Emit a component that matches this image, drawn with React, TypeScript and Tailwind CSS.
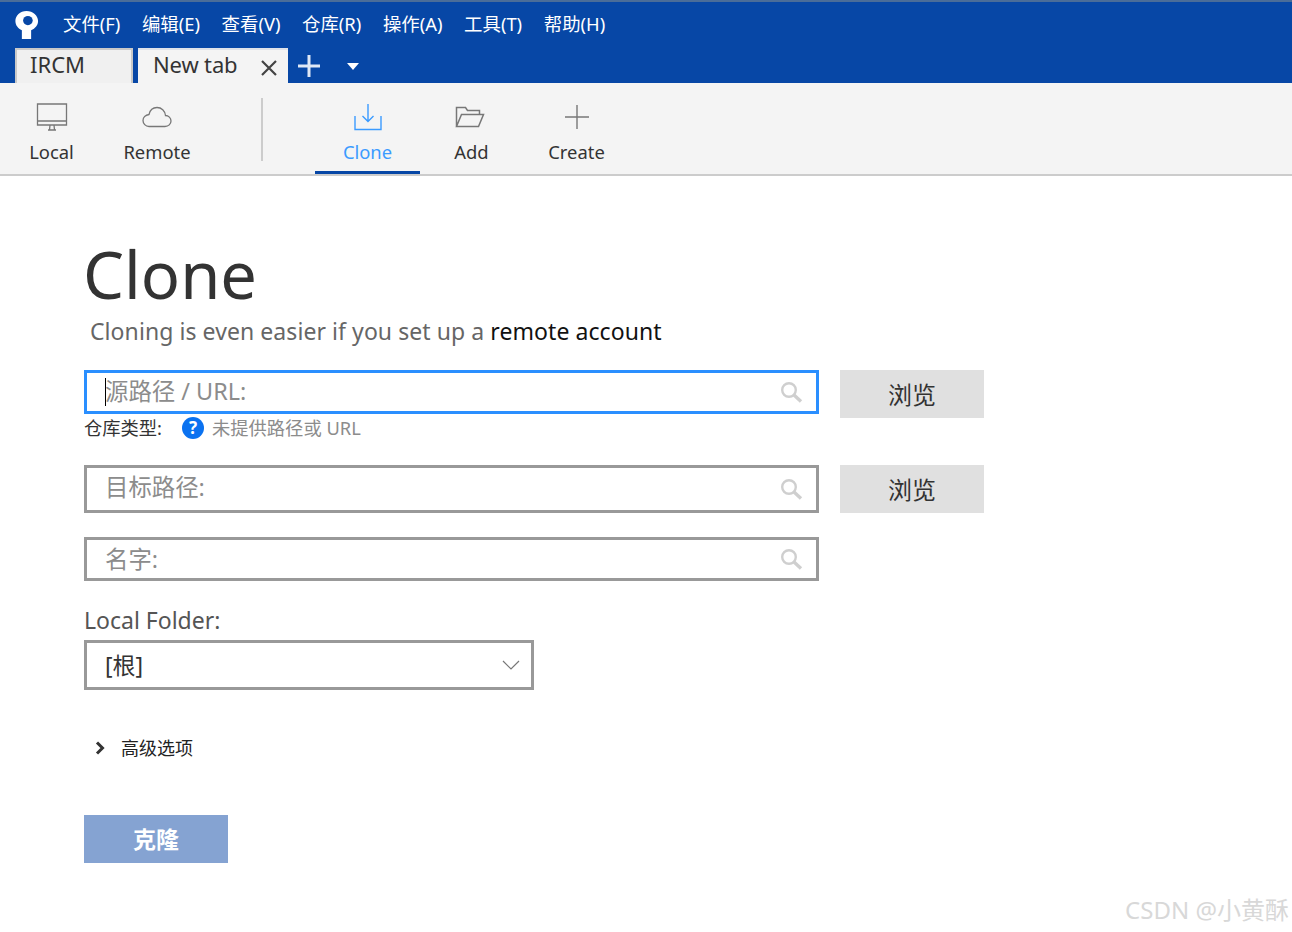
const font = "[font-family:'Noto_Sans','Noto_Sans_CJK_SC',sans-serif]";

const menus = ["文件(F)", "编辑(E)", "查看(V)", "仓库(R)", "操作(A)", "工具(T)", "帮助(H)"];

function SearchIcon() {
  return (
    <svg width="24" height="24" viewBox="0 0 24 24" fill="none" stroke="#cfcfcf" className="shrink-0">
      <circle cx="10" cy="10" r="6.8" strokeWidth="2.4" />
      <path d="M15 15l7 6.5" strokeWidth="3.4" />
    </svg>
  );
}

function ToolButton({ label, active, icon, width }: { label: string; active?: boolean; icon: React.ReactNode; width: string }) {
  return (
    <div className={`flex flex-col items-center h-full ${width} ${active ? "border-b-[3px] border-[#0747a6]" : ""}`}>
      <div className="h-[44px] mt-[12px] flex items-center justify-center">{icon}</div>
      <span className={`text-[18.400px] leading-[26px] ${active ? "text-[#3b9bff]" : "text-[#333]"}`}>{label}</span>
    </div>
  );
}

function Field({ placeholder, focused, height, textClass }: { placeholder: string; focused?: boolean; height: string; textClass?: string }) {
  return (
    <div className={`w-[735px] ${height} border-[3px] ${focused ? "border-[#2a8fff]" : "border-[#999]"} bg-white flex items-center pl-[18px] pr-[13px]`}>
      {focused && <span className="w-px h-[28px] bg-black -mr-px" />}
      <span className={`flex-1 text-[23.400px] leading-none text-[#8c8c8c] ${textClass ?? ""}`}>{placeholder}</span>
      <SearchIcon />
    </div>
  );
}

function BrowseButton() {
  return (
    <button className="w-[144px] h-[48px] ml-[21px] bg-[#e0e0e0] text-[24px] text-[#333] flex items-center justify-center pt-0.5">
      浏览
    </button>
  );
}

export default function App() {
  return (
    <div className={`${font} relative w-[1292px] h-[932px] bg-white overflow-hidden`}>
      {/* title bar */}
      <div className="bg-[#0747a6] h-[83px] border-t-2 border-[#4a6d99] flex flex-col">
        <div className="h-[44px] flex items-center pl-[14px]">
          <svg width="25" height="30" viewBox="0 0 27 34" preserveAspectRatio="none" className="mt-[1px]">
            <path d="M13.500 1C6.500 1 1.500 6 1.500 12.500c0 5 3 8.500 7 10.500v10h10V23c4.500-2 7.500-6 7.500-10.500C26 6 20.500 1 13.500 1z" fill="#fff" />
            <circle cx="15" cy="12" r="5.200" fill="#0747a6" />
          </svg>
          <div className="flex ml-6 gap-[21.600px] text-[18.400px] text-white -mt-px">
            {menus.map((m) => (
              <span key={m}>{m}</span>
            ))}
          </div>
        </div>
        <div className="h-[37px] flex items-end pl-[15px]">
          <div className="w-[118px] h-[35px] bg-[#f0f0f0] border-2 border-b-0 border-[#c9c9c9] pl-[13px] text-[22px] leading-[28px] text-[#333]">
            IRCM
          </div>
          <div className="w-[150px] h-[35px] ml-[5px] bg-[#f4f4f4] border-t-2 border-[#dfe3ea] flex items-center pl-[15px] text-[22px] text-[#333]">
            <span className="flex-1 pb-[4px] tracking-[-0.15px]">New tab</span>
            <svg width="18" height="18" viewBox="0 0 18 18" stroke="#444" strokeWidth="2.200" className="mr-[10px] mt-[2px]">
              <path d="M2 2l14 14M16 2L2 16" />
            </svg>
          </div>
          <svg width="24" height="24" viewBox="0 0 24 24" stroke="#dfe8f5" strokeWidth="3" className="ml-[9px] mb-[5px]">
            <path d="M12 1v22M1 12h22" />
          </svg>
          <svg width="12" height="7" viewBox="0 0 12 7" fill="#fff" className="ml-[26px] mb-[13px]">
            <path d="M0 0h12L6 7z" />
          </svg>
        </div>
      </div>

      {/* toolbar */}
      <div className="h-[93px] bg-[#f4f4f4] border-b-2 border-[#cccccc] flex items-stretch">
        <ToolButton
          label="Local"
          width="w-[103px]"
          icon={
            <svg width="32" height="28" viewBox="0 0 32 28" fill="none" stroke="#777" strokeWidth="1.300">
              <path d="M1.500 1h29v21h-29zM1.500 18h29M12 27h8M14 22l-.5 5M18 22l.5 5" />
            </svg>
          }
        />
        <ToolButton
          label="Remote"
          width="w-[108px]"
          icon={
            <svg width="30" height="22" viewBox="0 0 30 22" fill="none" stroke="#777" strokeWidth="1.300">
              <path d="M7 20.500h16c3.500 0 6-2.500 6-5.500s-2.500-5.500-5.500-5.500C23 5 19.500 1.500 15 1.500c-4 0-7 2.500-8 7-3.500.5-6 3-6 6s2.500 6 6 6z" />
            </svg>
          }
        />
        <div className="w-[2px] h-[63px] mt-[15px] ml-[50px] bg-[#cccccc]" />
        <div className="ml-[52px]" />
        <ToolButton
          label="Clone"
          active
          width="w-[105px]"
          icon={
            <svg width="28" height="27" viewBox="0 0 28 27" fill="none" stroke="#3b9bff" strokeWidth="1.400">
              <path d="M14 0v17M8.500 12l5.500 5.500 5.500-5.500M1 12v13.500h26V12" />
            </svg>
          }
        />
        <ToolButton
          label="Add"
          width="w-[103px]"
          icon={
            <svg width="30" height="22" viewBox="0 0 30 22" fill="none" stroke="#777" strokeWidth="1.500" className="-ml-[3px]">
              <path d="M1.500 20.500V1.500h9l2 3h12v4M1.500 20.500l5-12h22l-5 12z" />
            </svg>
          }
        />
        <ToolButton
          label="Create"
          width="w-[107px]"
          icon={
            <svg width="24" height="24" viewBox="0 0 24 24" fill="none" stroke="#777" strokeWidth="1.400">
              <path d="M12 0v24M0 12h24" />
            </svg>
          }
        />
      </div>

      {/* clone form */}
      <div className="pl-[84px] pt-[57px]">
        <h1 className="text-[65px] leading-[82px] text-[#333] font-normal -ml-px">Clone</h1>
        <p className="text-[23px] leading-[32px] ml-[6px] tracking-[0.07px] text-[#666] mb-[23px]">
          Cloning is even easier if you set up a <span className="text-[#111]">remote account</span>
        </p>

        <div className="flex items-start">
          <Field placeholder="源路径 / URL:" focused height="h-[44px]" />
          <BrowseButton />
        </div>
        <div className="h-[51px] -mt-[4px] flex items-start text-[18.300px] leading-[28px]">
          <span className="text-[#333] w-[98px]">仓库类型:</span>
          <span className="w-[22px] h-[22px] mt-[3px] rounded-full bg-[#0b72f0] text-white text-[17px] leading-[22px] font-bold text-center">?</span>
          <span className="ml-2 text-[#8c8c8c]">未提供路径或 URL</span>
        </div>
        <div className="flex items-start">
          <Field placeholder="目标路径:" height="h-[48px]" textClass="pb-[2px]" />
          <BrowseButton />
        </div>
        <div className="mt-6">
          <Field placeholder="名字:" height="h-[44px]" textClass="pt-[2px]" />
        </div>

        <div className="mt-[24px] text-[23px] leading-[30px] text-[#555]">Local Folder:</div>
        <div className="mt-[5px] w-[450px] h-[50px] border-[3px] border-[#999] flex items-center justify-between pl-[18px] pr-[11px] text-[23px] text-[#333]">
          <span>[根]</span>
          <svg width="18" height="10" viewBox="0 0 18 10" fill="none" stroke="#777" strokeWidth="1.200">
            <path d="M1 1l8 8 8-8" />
          </svg>
        </div>

        <div className="mt-[46px] flex items-center h-[24px] text-[18px] text-[#222]">
          <svg width="10" height="14" viewBox="0 0 10 14" fill="none" stroke="#333" strokeWidth="3" className="ml-[11px]">
            <path d="M2 1.500L7.500 7 2 12.500" />
          </svg>
          <span className="ml-[16px]">高级选项</span>
        </div>

        <button className="mt-[55px] w-[144px] h-[48px] bg-[#85a3d2] text-white text-[23px] font-bold flex items-center justify-center">
          克隆
        </button>
      </div>

      {/* watermark */}
      <div className="absolute right-[3px] top-[893px] text-[24px] leading-[34px] text-[#d8d8d8]">CSDN @小黄酥</div>
    </div>
  );
}
